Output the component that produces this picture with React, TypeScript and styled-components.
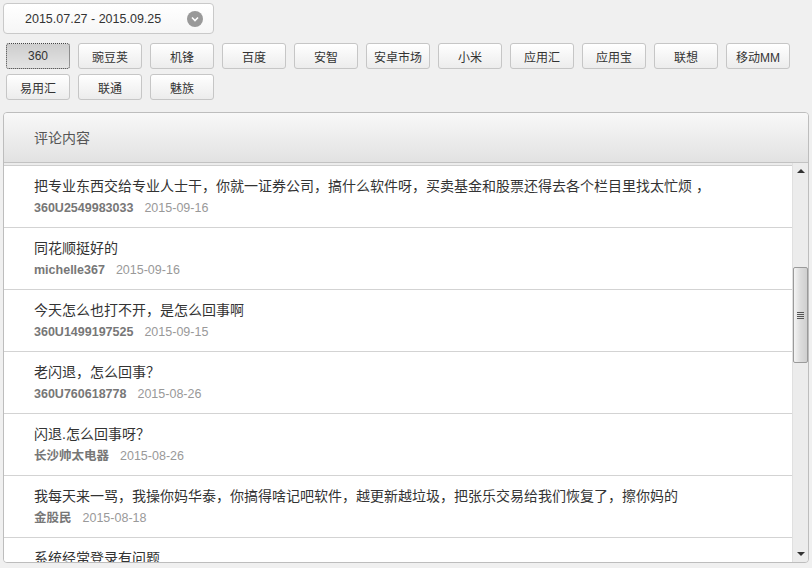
import React from "react";
import styled, { createGlobalStyle, css } from "styled-components";

const Global = createGlobalStyle`
  html, body { margin: 0; padding: 0; }
  body {
    background: #f0f0f0;
    font-family: "Liberation Sans", "Noto Sans CJK SC", sans-serif;
    color: #333;
    overflow: hidden;
  }
  * { box-sizing: border-box; }
`;

const Page = styled.div`
  padding: 3px;
  width: 812px;
  height: 568px;
  display: flex;
  flex-direction: column;
`;

const DatePicker = styled.div`
  width: 211px;
  height: 31px;
  border: 1px solid #c9c9c9;
  border-radius: 4px;
  background: linear-gradient(#ffffff, #f6f6f6);
  display: flex;
  align-items: center;
  padding: 0 10px 0 21px;
  justify-content: space-between;
`;

const DateText = styled.span`
  font-size: 12.5px;
  color: #333;
`;

const DropIcon = styled.span`
  width: 16px;
  height: 16px;
  border-radius: 50%;
  background: #999;
  display: inline-flex;
  align-items: center;
  justify-content: center;
`;

const Tabs = styled.div`
  display: flex;
  flex-wrap: wrap;
  column-gap: 8px;
  row-gap: 5px;
  margin: 9px 0 0 3px;
`;

const Tab = styled.button<{ $active?: boolean }>`
  width: 64px;
  height: 26px;
  padding: 0;
  font-family: "Liberation Sans", "Noto Sans CJK SC", sans-serif;
  font-size: 12px;
  color: #333;
  border: 1px solid #c6c6c6;
  border-radius: 3px;
  background: linear-gradient(#ffffff, #ececec);
  cursor: pointer;
  ${(p) =>
    p.$active &&
    css`
      background: linear-gradient(#cdcdcd, #e4e4e4);
      border: 1px dotted #444;
    `}
`;

const Panel = styled.div`
  margin-top: 12px;
  height: 451px;
  border: 1px solid #bdbdbd;
  border-radius: 4px;
  overflow: hidden;
  display: flex;
  flex-direction: column;
  background: #ececec;
`;

const PanelHeader = styled.div`
  height: 50px;
  flex: none;
  border-bottom: 1px solid #c2c2c2;
  background: linear-gradient(#f8f8f8, #e2e2e2);
  display: flex;
  align-items: center;
  padding: 0 0 1px 30px;
  font-size: 14px;
  color: #555;
`;

const PanelBody = styled.div`
  flex: 1;
  display: flex;
  min-height: 0;
`;

const List = styled.div`
  flex: 1;
  margin-top: 2px;
  border-top: 1px solid #cfcfcf;
  background: #fff;
  overflow: hidden;
`;

const Row = styled.div`
  height: 62px;
  border-bottom: 1px solid #d3d3d3;
  padding: 9px 0 0 30px;
`;

const Comment = styled.div`
  font-size: 14px;
  line-height: 22px;
  color: #333;
  white-space: nowrap;
`;

const Meta = styled.div`
  font-size: 12.5px;
  line-height: 22px;
  display: flex;
  gap: 11px;
`;

const User = styled.span`
  font-weight: bold;
  color: #777;
`;

const DateLabel = styled.span`
  color: #999;
`;

const ScrollBar = styled.div`
  width: 16px;
  flex: none;
  background: #ececec;
  border-left: 1px solid #e0e0e0;
  display: flex;
  flex-direction: column;
`;

const Arrow = styled.div`
  height: 16px;
  flex: none;
  display: flex;
  align-items: center;
  justify-content: center;
`;

const Track = styled.div`
  flex: 1;
  display: flex;
  flex-direction: column;
`;

const Thumb = styled.div<{ $offset: number; $size: number }>`
  margin-top: ${(p) => p.$offset}px;
  height: ${(p) => p.$size}px;
  width: 15px;
  border: 1px solid #9a9a9a;
  border-radius: 2px;
  background: linear-gradient(90deg, #f4f4f4, #dcdcdc 50%, #cfcfcf);
  display: flex;
  align-items: center;
  justify-content: center;
`;

const Grip = styled.div`
  width: 7px;
  display: flex;
  flex-direction: column;
  gap: 1px;
  span {
    display: block;
    height: 1px;
    background: #555;
  }
`;

const tabs = [
  "360",
  "豌豆荚",
  "机锋",
  "百度",
  "安智",
  "安卓市场",
  "小米",
  "应用汇",
  "应用宝",
  "联想",
  "移动MM",
  "易用汇",
  "联通",
  "魅族",
];

const comments = [
  {
    text: "把专业东西交给专业人士干，你就一证券公司，搞什么软件呀，买卖基金和股票还得去各个栏目里找太忙烦 ，",
    user: "360U2549983033",
    date: "2015-09-16",
  },
  { text: "同花顺挺好的", user: "michelle367", date: "2015-09-16" },
  { text: "今天怎么也打不开，是怎么回事啊", user: "360U1499197525", date: "2015-09-15" },
  { text: "老闪退，怎么回事？", user: "360U760618778", date: "2015-08-26" },
  { text: "闪退.怎么回事呀？", user: "长沙帅太电器", date: "2015-08-26" },
  {
    text: "我每天来一骂，我操你妈华泰，你搞得啥记吧软件，越更新越垃圾，把张乐交易给我们恢复了，擦你妈的",
    user: "金股民",
    date: "2015-08-18",
  },
  { text: "系统经常登录有问题", user: "", date: "" },
];

export default function App() {
  return (
    <Page>
      <Global />
      <DatePicker>
        <DateText>2015.07.27 - 2015.09.25</DateText>
        <DropIcon>
          <svg width="8" height="6" viewBox="0 0 8 6">
            <path d="M1 1.5 L4 4.5 L7 1.5" stroke="#fff" strokeWidth="1.6" fill="none" />
          </svg>
        </DropIcon>
      </DatePicker>
      <Tabs>
        {tabs.map((t, i) => (
          <Tab key={t} $active={i === 0}>
            {t}
          </Tab>
        ))}
      </Tabs>
      <Panel>
        <PanelHeader>评论内容</PanelHeader>
        <PanelBody>
          <List>
            {comments.map((c, i) => (
              <Row key={i}>
                <Comment>{c.text}</Comment>
                {c.user && (
                  <Meta>
                    <User>{c.user}</User>
                    <DateLabel>{c.date}</DateLabel>
                  </Meta>
                )}
              </Row>
            ))}
          </List>
          <ScrollBar>
            <Arrow>
              <svg width="8" height="4" viewBox="0 0 8 4">
                <path d="M0 4 L4 0 L8 4 Z" fill="#333" />
              </svg>
            </Arrow>
            <Track>
              <Thumb $offset={88} $size={96}>
                <Grip>
                  <span />
                  <span />
                  <span />
                  <span />
                </Grip>
              </Thumb>
            </Track>
            <Arrow>
              <svg width="8" height="4" viewBox="0 0 8 4">
                <path d="M0 0 L8 0 L4 4 Z" fill="#333" />
              </svg>
            </Arrow>
          </ScrollBar>
        </PanelBody>
      </Panel>
    </Page>
  );
}
